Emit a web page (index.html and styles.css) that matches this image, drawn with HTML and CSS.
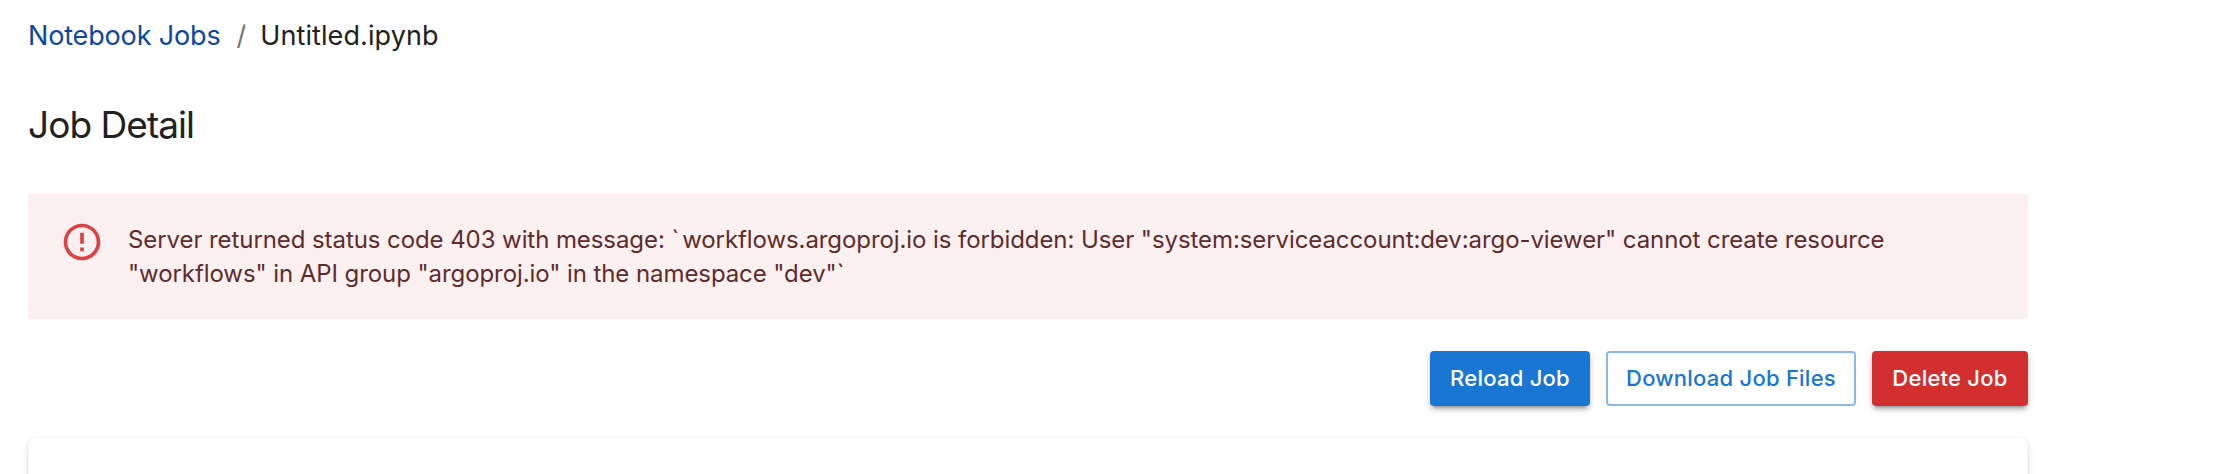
FILE: index.html
```html
<!DOCTYPE html>
<html lang="en">
<head>
<meta charset="utf-8">
<title>Job Detail</title>
<link rel="stylesheet" href="styles.css">
</head>
<body>
<main class="page">
  <nav class="breadcrumbs">
    <a class="crumb-link">Notebook Jobs</a>
    <span class="separator">/</span>
    <span class="crumb-current">Untitled.ipynb</span>
  </nav>
  <h1 class="title">Job Detail</h1>
  <div class="alert" role="alert">
    <svg class="alert-icon" viewBox="0 0 24 24"><path d="M11 15h2v2h-2zm0-8h2v6h-2zm.99-5C6.47 2 2 6.48 2 12s4.47 10 9.99 10C17.52 22 22 17.52 22 12S17.52 2 11.99 2zM12 20c-4.42 0-8-3.58-8-8s3.58-8 8-8 8 3.58 8 8-3.58 8-8 8z"/></svg>
    <p class="alert-message">Server returned status code 403 with message: <span class="quote-mark">`</span>workflows.argoproj.io is forbidden: User "system:serviceaccount:dev:argo-viewer" cannot create resource<br>"workflows" in API group "argoproj.io" in the namespace "dev"<span class="quote-mark">`</span></p>
  </div>
  <div class="actions">
    <button class="button reload">Reload Job</button>
    <button class="button download">Download Job Files</button>
    <button class="button delete">Delete Job</button>
  </div>
  <section class="card"></section>
</main>
</body>
</html>
```
FILE: styles.css
```css
* { box-sizing: border-box; }
body { margin: 0; background: #fff; color: #212121; font-family: Inter, "Liberation Sans", sans-serif; }
.page { width: 2048px; height: 474px; padding: 15px 20px 0 28px; overflow: hidden; }
.breadcrumbs { display: flex; height: 42px; line-height: 42px; font-size: 27px; }
.crumb-link { color: #0d47a1; letter-spacing: -0.16px; }
.separator { margin: 0 14px 0 16px; color: #757575; }
.crumb-current { letter-spacing: 0.1px; }
.title { margin: 37px 0 0; height: 62px; line-height: 62px; font-size: 37px; font-weight: 400; letter-spacing: -0.95px; }
.alert { display: flex; margin-top: 38px; height: 125px; padding: 12px 32px; border-radius: 4px; background: #fbf0f0; color: #5f2b2b; }
.alert-icon { width: 44px; height: 44px; margin: 14px 24px 0 0; fill: #db4242; }
.alert-message { margin: 17px 0 0; font-size: 24px; line-height: 34.3px; letter-spacing: -0.08px; white-space: nowrap; }
.quote-mark { letter-spacing: 3px; }
.actions { display: flex; justify-content: flex-end; gap: 16px; margin-top: 32px; }
.button { height: 55px; padding: 0; border: 0; border-radius: 4px; color: #fff; font: 550 22px/55px Inter, "Liberation Sans", sans-serif; letter-spacing: 0.24px; white-space: nowrap; }
.reload { width: 160px; background: #1976d2; }
.download { width: 250px; border: 2px solid #8cbae8; background: #fff; color: #1976d2; line-height: 51px; }
.delete { width: 156px; background: #d32f2f; }
.reload, .delete { box-shadow: 0 6px 2px -4px rgba(0,0,0,.2), 0 4px 4px rgba(0,0,0,.14), 0 2px 10px rgba(0,0,0,.12); }
.card { height: 80px; margin-top: 32px; border-radius: 8px; box-shadow: 0 4px 2px -2px rgba(0,0,0,.2), 0 2px 2px rgba(0,0,0,.14), 0 2px 6px rgba(0,0,0,.12); }
```
